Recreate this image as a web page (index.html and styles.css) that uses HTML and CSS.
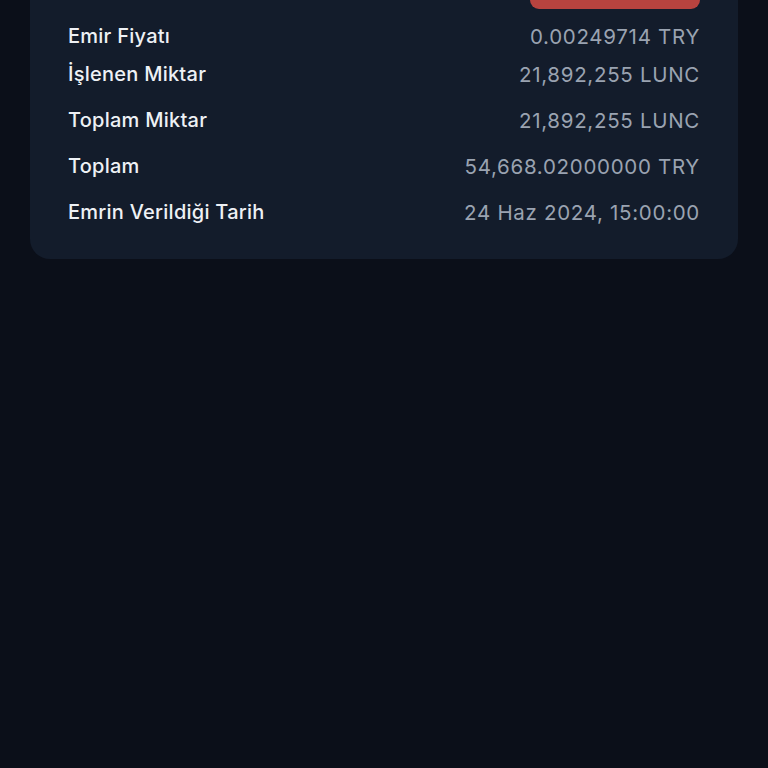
FILE: index.html
```html
<!DOCTYPE html>
<html lang="tr">
<head>
<meta charset="UTF-8">
<meta name="viewport" content="width=device-width, initial-scale=1.0">
<title>Emir Detayı</title>
<link rel="stylesheet" href="styles.css">
</head>
<body>
    <div class="page">
        <div class="order-card">
            <div class="card-top">
                <button class="cancel-btn" type="button" aria-label="İptal Et"></button>
            </div>
            <div class="row first">
                <span class="label">Emir Fiyatı</span>
                <span class="value">0.00249714 TRY</span>
            </div>
            <div class="row">
                <span class="label">İşlenen Miktar</span>
                <span class="value">21,892,255 LUNC</span>
            </div>
            <div class="row">
                <span class="label">Toplam Miktar</span>
                <span class="value">21,892,255 LUNC</span>
            </div>
            <div class="row">
                <span class="label">Toplam</span>
                <span class="value">54,668.02000000 TRY</span>
            </div>
            <div class="row">
                <span class="label">Emrin Verildiği Tarih</span>
                <span class="value">24 Haz 2024, 15:00:00</span>
            </div>
        </div>
    </div>
</body>
</html>
```

FILE: styles.css
```css
html, body {
    margin: 0;
    padding: 0;
    background-color: #0b0f19;
    min-height: 100vh;
}

body {
    font-family: 'Inter', 'Noto Sans', sans-serif;
    overflow: hidden;
}

.page {
    padding: 0 30px;
    margin-top: -44px;
}

.order-card {
    background-color: #131c2b;
    border-radius: 20px;
    padding: 0 38px 24px 38px;
}

.card-top {
    display: flex;
    justify-content: flex-end;
    padding-bottom: 12px;
}

.cancel-btn {
    width: 170px;
    height: 53px;
    border: none;
    border-radius: 9px;
    background-color: #b8433f;
}

.row {
    display: flex;
    justify-content: space-between;
    align-items: center;
    height: 46px;
    font-size: 20px;
}

.row.first {
    height: 30px;
}

.label {
    color: #eef1f5;
    font-weight: 500;
    letter-spacing: 0.25px;
}

.value {
    color: #9aa3b1;
    font-size: 20.5px;
    letter-spacing: 0.7px;
}
```
